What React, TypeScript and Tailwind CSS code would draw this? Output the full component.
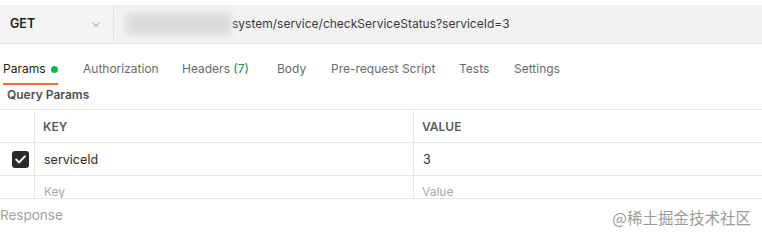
import React from "react";

function Tab({ w, children, active }: { w: string; children: React.ReactNode; active?: boolean }) {
  return (
    <div className={`${w} flex flex-col shrink-0`}>
      <div className="h-[16px] leading-[16px] flex items-center whitespace-nowrap">{children}</div>
      <div className={`h-[2px] mt-[6px] ${active ? "bg-[#f26b3a] w-[55px]" : "bg-transparent"}`} />
    </div>
  );
}

export default function App() {
  const font = { fontFamily: "Inter, 'Noto Sans', sans-serif" };
  return (
    <div className="w-[762px] h-[241px] bg-white relative overflow-hidden text-[12px]" style={font}>
      <div className="h-[5px]" />
      {/* URL bar */}
      <div className="flex h-[39px] bg-[#f2f2f2] border-b border-[#e4e4e4]">
        <div className="w-[114px] flex items-center justify-between pl-[10px] pr-[13px] border-r border-[#e2e2e2] bg-[#f4f4f4]">
          <span className="font-semibold text-[#212121] text-[12.5px]">GET</span>
          <svg width="8" height="5" viewBox="0 0 8 5">
            <path d="M0.5 0.8 L4 4.2 L7.5 0.8" fill="none" stroke="#8a8a8a" strokeWidth="1" />
          </svg>
        </div>
        <div className="flex items-center pl-[11px]">
          <div className="w-[107px] h-[22px] rounded-[4px] bg-[#dcdcdc] blur-[3px]" />
          <span className="text-[#3a3a3a] text-[12px]">system/service/checkServiceStatus?serviceId=3</span>
        </div>
      </div>
      {/* Tabs */}
      <div className="flex items-end h-[41px] pl-[3px] text-[#6b6b6b] text-[12px]">
        <Tab w="w-[80px]" active>
          <span className="text-[#212121]">Params</span>
          <span className="ml-[5px] w-[7px] h-[7px] rounded-full bg-[#0cbb52]" />
        </Tab>
        <Tab w="w-[99px]">Authorization</Tab>
        <Tab w="w-[95px]">
          Headers&nbsp;<span className="text-[#168a46]">(7)</span>
        </Tab>
        <Tab w="w-[54px]">Body</Tab>
        <Tab w="w-[128px]">Pre-request Script</Tab>
        <Tab w="w-[55px]">Tests</Tab>
        <Tab w="w-[80px]">Settings</Tab>
      </div>
      <div className="pl-[7px] h-[24px] pb-[4px] flex items-center font-semibold text-[#505050] text-[12px]">Query Params</div>
      {/* Table */}
      <div className="border-t border-b border-[#e6e6e6]">
        <div className="flex h-[33px] border-b border-[#e6e6e6]">
          <div className="w-[35px] border-r border-[#e6e6e6]" />
          <div className="w-[379px] border-r border-[#e6e6e6] flex items-center pl-[8px] pt-[1px] font-semibold text-[#5a5a5a] text-[12px]">KEY</div>
          <div className="flex-1 flex items-center pl-[8px] pt-[1px] font-semibold text-[#5a5a5a] text-[12px]">VALUE</div>
        </div>
        <div className="flex h-[33px] border-b border-[#e6e6e6]">
          <div className="w-[35px] border-r border-[#e6e6e6] flex items-center justify-end pr-[5px] pt-[1px]">
            <div className="w-[17px] h-[17px] rounded-[3px] bg-[#2b2b2b] flex items-center justify-center">
              <svg width="11" height="9" viewBox="0 0 11 9">
                <path d="M1.2 4.6 L4.2 7.4 L9.8 1.4" fill="none" stroke="white" strokeWidth="2" strokeLinecap="round" strokeLinejoin="round" />
              </svg>
            </div>
          </div>
          <div className="w-[379px] border-r border-[#e6e6e6] flex items-center pl-[9px] pt-[2px] text-[#2e2e2e] text-[12.5px]">serviceId</div>
          <div className="flex-1 flex items-center pl-[9px] pt-[2px] text-[#2e2e2e] text-[12.5px]">3</div>
        </div>
        <div className="flex h-[22px] overflow-hidden">
          <div className="w-[35px] border-r border-[#e6e6e6]" />
          <div className="w-[379px] border-r border-[#e6e6e6] pl-[9px] pt-[8px] text-[#a9a9a9] text-[12px] leading-[15px]">Key</div>
          <div className="flex-1 pl-[8px] pt-[8px] text-[#a9a9a9] text-[12px] leading-[15px]">Value</div>
        </div>
      </div>
      <div className="flex items-center justify-between h-[32px]">
        <span className="text-[#a2a2a2] text-[13.5px]">Response</span>
        <span className="text-[#9a9a9a] text-[15.5px] pr-[11px] mt-[6px]" style={{ fontFamily: "'Noto Sans CJK SC', sans-serif" }}>@稀土掘金技术社区</span>
      </div>
    </div>
  );
}
